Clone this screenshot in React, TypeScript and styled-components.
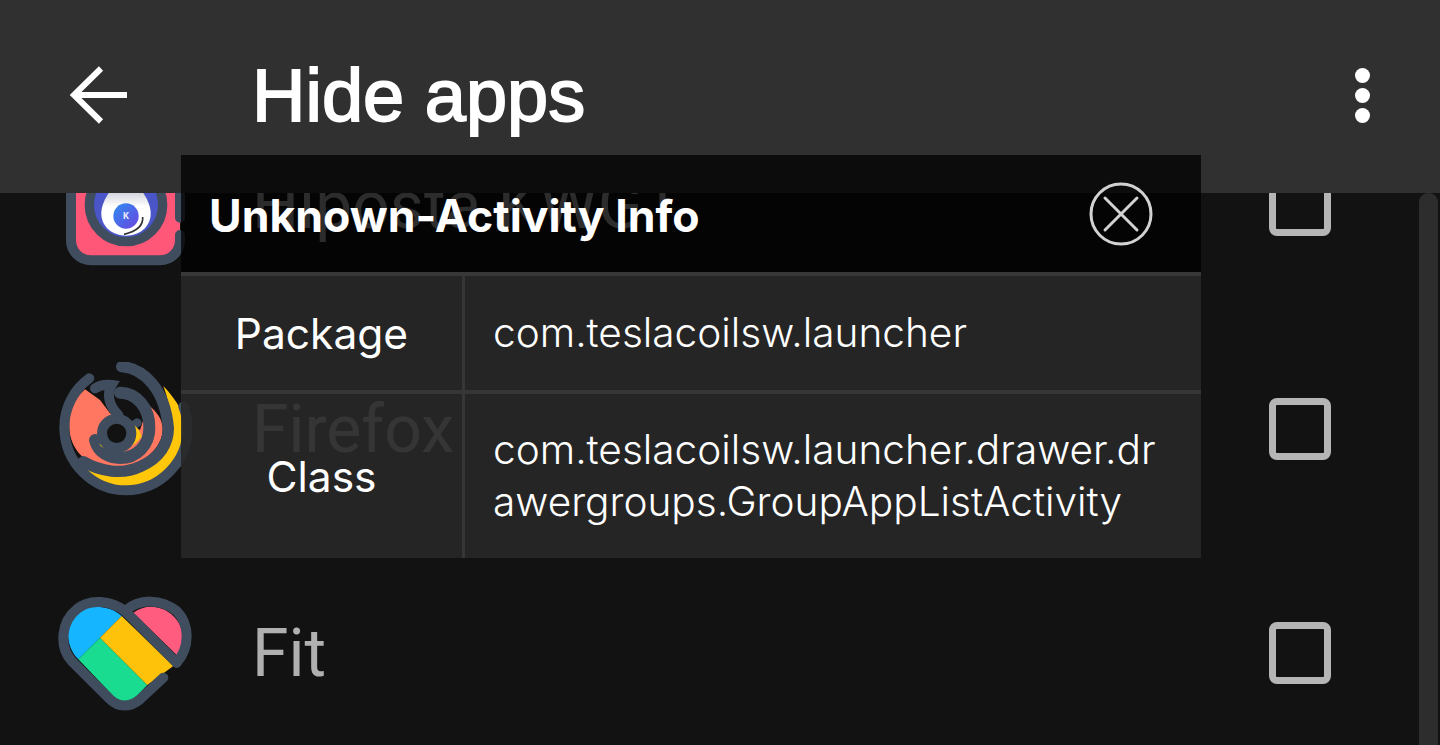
import React from 'react';
import styled, { createGlobalStyle } from 'styled-components';

const GlobalStyle = createGlobalStyle`
	html, body {
		margin: 0;
		padding: 0;
		background: #121212;
	}
	* {
		box-sizing: border-box;
	}
`;

function BackIcon() {
	return (
		<svg width="60" height="60" viewBox="0 0 60 60" fill="none" stroke="#fff" strokeWidth="6">
			<path d="M58 30H6" />
			<path d="M32 3.5L5 30l27 26.5" />
		</svg>
	);
}

function CloseIcon() {
	return (
		<svg width="64" height="64" viewBox="0 0 64 64" fill="none" stroke="#d2d2d2" strokeWidth="3" strokeLinecap="round">
			<circle cx="32" cy="32" r="30" />
			<path d="M16 16l32 32M48 16L16 48" />
		</svg>
	);
}

function KustomIcon() {
	return (
		<svg width="134" height="134" viewBox="54 -39 402 402">
			<defs>
				<linearGradient id="drop" x1="0" y1="0" x2="0" y2="1">
					<stop offset="0" stopColor="#8f8fa8" />
					<stop offset="0.55" stopColor="#fff" />
				</linearGradient>
				<linearGradient id="dot" x1="0" y1="0" x2="1" y2="1">
					<stop offset="0" stopColor="#2f8cf0" />
					<stop offset="1" stopColor="#6a45e0" />
				</linearGradient>
			</defs>
			<rect x="93" y="1" width="327" height="327" rx="60" fill="#ff5777" />
			<path
				d="M420 200V61a60 60 0 0 0-60-60H153a60 60 0 0 0-60 60v207a60 60 0 0 0 60 60h207a60 60 0 0 0 60-60v-16"
				fill="none"
				stroke="#3f4d5e"
				strokeWidth="30"
				strokeLinecap="round"
			/>
			<circle cx="258" cy="162" r="110" fill="#4a55c8" stroke="#3f4d5e" strokeWidth="28" />
			<path d="M258 60C215 110 182 150 184 192c2 36 34 62 74 62s72-26 74-62C334 150 301 110 258 60z" fill="url(#drop)" />
			<circle cx="258" cy="195" r="38" fill="url(#dot)" />
			<text x="258" y="205" fontFamily="Roboto, sans-serif" fontSize="28" fontWeight="700" fill="#e6e6ff" textAnchor="middle">K</text>
			<path d="M308 198c2 22-14 42-56 52" fill="none" stroke="#333" strokeWidth="5" />
		</svg>
	);
}

function FirefoxIcon() {
	return (
		<svg width="134" height="134" viewBox="54 36 402 402" fill="none">
			<path d="M135 118C100 150 85 190 88 235c2 55 42 110 112 117 90 13 170-52 168-117-2-30-18-50-43-70l-25 75-90-50-30-40z" fill="#ff7661" />
			<path d="M370 108c40 42 70 92 70 132 0 60-40 180-182 180-58 0-108-40-128-70 60 28 120 30 170 0 60-35 120-110 70-242z" fill="#ffc60a" />
			<g stroke="#3f4d5e" strokeWidth="30" strokeLinecap="round">
				<path d="M148 85C100 120 72 175 73 235c2 105 87 186 185 186 102 0 185-86 185-186 0-25-5-45-13-65" />
				<path d="M245 50c65 5 130 65 140 185 0 45-25 90-85 115-50 25-120 15-170-15" strokeWidth="34" />
				<path d="M240 128c50 0 90 47 88 107 0 50-38 89-88 89-30 0-65-14-75-54" strokeWidth="36" />
				<path d="M165 115c15-10 35-12 50-10-15 25-10 60 20 90" />
				<path d="M292 218l-12 8" strokeWidth="26" />
			</g>
			<path d="M178 282c15 24 80 38 127-22-3-18-20-40-47-48l-8 6c14 10 22 22 22 36-30 36-70 40-94 28z" fill="#ffc60a" />
			<circle cx="230" cy="250" r="44" fill="#121212" stroke="#3f4d5e" strokeWidth="30" />
		</svg>
	);
}

function FitIcon() {
	return (
		<svg width="134" height="115" viewBox="54 45 402 345" fill="none">
			<path d="M245 105C215 75 150 65 110 95c-35 30-35 100 5 140l65-65z" fill="#16b5ff" />
			<path d="M115 235l65-65 142 142-32 33c-20 20-50 20-70 0z" fill="#19dc90" />
			<path d="M180 170l65-65 155 150-78 57z" fill="#ffc20a" />
			<path d="M280 95c40-30 90-20 120 10 35 35 35 80 10 117z" fill="#ff5c80" />
			<g stroke="#3f4d5e" strokeWidth="30" strokeLinecap="round">
				<path d="M370 290l-70 65c-30 25-65 25-90 0L95 240C55 195 65 120 110 85c40-35 105-25 145 5l155 155" />
				<path d="M255 90c45-40 110-35 155 0 40 40 40 110 0 155" />
			</g>
		</svg>
	);
}

const apps = [
	{ name: 'Hiposta KWGT', icon: <KustomIcon /> },
	{ name: 'Firefox', icon: <FirefoxIcon /> },
	{ name: 'Fit', icon: <FitIcon /> },
];

export default function App() {
	return (
		<>
			<GlobalStyle />
			<Screen>
				<Toolbar>
					<BackButton>
						<BackIcon />
					</BackButton>
					<ToolbarTitle>Hide apps</ToolbarTitle>
					<MoreButton>
						<Dot />
						<Dot />
						<Dot />
					</MoreButton>
				</Toolbar>
				<AppList>
					{apps.map((app) => (
						<AppRow key={app.name}>
							<IconSlot>{app.icon}</IconSlot>
							<AppName>{app.name}</AppName>
							<CheckBox />
						</AppRow>
					))}
				</AppList>
				<ScrollBar />
				<InfoPopup>
					<PopupHeader>
						<PopupTitle>Unknown-Activity Info</PopupTitle>
						<CloseIcon />
					</PopupHeader>
					<InfoRow $height={114}>
						<InfoLabel>Package</InfoLabel>
						<InfoValue>com.teslacoilsw.launcher</InfoValue>
					</InfoRow>
					<InfoRow $height={164}>
						<InfoLabel>Class</InfoLabel>
						<InfoValue>com.teslacoilsw.launcher.drawer.drawergroups.GroupAppListActivity</InfoValue>
					</InfoRow>
				</InfoPopup>
			</Screen>
		</>
	);
}

const Screen = styled.div`
	position: relative;
	width: 1440px;
	height: 745px;
	overflow: hidden;
	background: #121212;
`;

const Toolbar = styled.header`
	position: relative;
	z-index: 1;
	display: flex;
	align-items: center;
	height: 193px;
	margin-bottom: -100px;
	padding: 0 70px 3px 69px;
	background: #303030;
`;

const BackButton = styled.div`
	display: flex;
	width: 183px;
`;

const ToolbarTitle = styled.h1`
	flex: 1;
	margin: 0;
	font-family: 'Liberation Sans', sans-serif;
	font-size: 74px;
	font-weight: 400;
	-webkit-text-stroke: 1.8px #fff;
	color: #fff;
`;

const MoreButton = styled.div`
	display: flex;
	flex-direction: column;
	gap: 5px;
`;

const Dot = styled.span`
	width: 15px;
	height: 15px;
	border-radius: 50%;
	background: #fff;
`;

const AppList = styled.div`
	display: flex;
	flex-direction: column;
`;

const AppRow = styled.div`
	display: flex;
	align-items: center;
	height: 224px;
	padding: 0 109px 0 58px;
`;

const IconSlot = styled.div`
	display: flex;
	align-items: center;
	width: 134px;
	margin-right: 60px;
`;

const AppName = styled.div`
	flex: 1;
	font-family: Roboto, sans-serif;
	font-size: 66px;
	color: #b0b0b0;
`;

const CheckBox = styled.div`
	width: 62px;
	height: 62px;
	border: 7px solid #b5b5b5;
	border-radius: 8px;
`;

const ScrollBar = styled.div`
	position: absolute;
	top: 193px;
	bottom: 0;
	left: 1419px;
	width: 19px;
	border-radius: 9px 9px 0 0;
	background: #2d2d2d;
`;

const InfoPopup = styled.div`
	position: absolute;
	z-index: 2;
	top: 155px;
	left: 181px;
	width: 1020px;
`;

const PopupHeader = styled.div`
	display: flex;
	align-items: center;
	justify-content: space-between;
	height: 121px;
	padding: 0 48px 0 28px;
	background: rgba(0, 0, 0, 0.75);
	border-bottom: 4px solid #383838;
`;

const PopupTitle = styled.div`
	padding-top: 4px;
	font-family: Inter, sans-serif;
	font-size: 44.6px;
	font-weight: 700;
	color: #fff;
`;

const InfoRow = styled.div<{ $height: number }>`
	display: grid;
	grid-template-columns: 284px 1fr;
	height: ${(p) => p.$height + 4}px;
	background: rgba(40, 40, 40, 0.9);
	border-bottom: 4px solid #363636;
	&:last-child {
		height: ${(p) => p.$height}px;
		border-bottom: 0;
	}
`;

const InfoLabel = styled.div`
	display: flex;
	align-items: center;
	justify-content: center;
	border-right: 3px solid #363636;
	font-family: Inter, sans-serif;
	font-size: 42.5px;
	color: #fff;
`;

const InfoValue = styled.div`
	display: flex;
	align-items: center;
	padding: 0 42px 0 28px;
	font-family: Inter, sans-serif;
	font-size: 40.6px;
	font-weight: 300;
	line-height: 52px;
	color: #fff;
	word-break: break-all;
`;
